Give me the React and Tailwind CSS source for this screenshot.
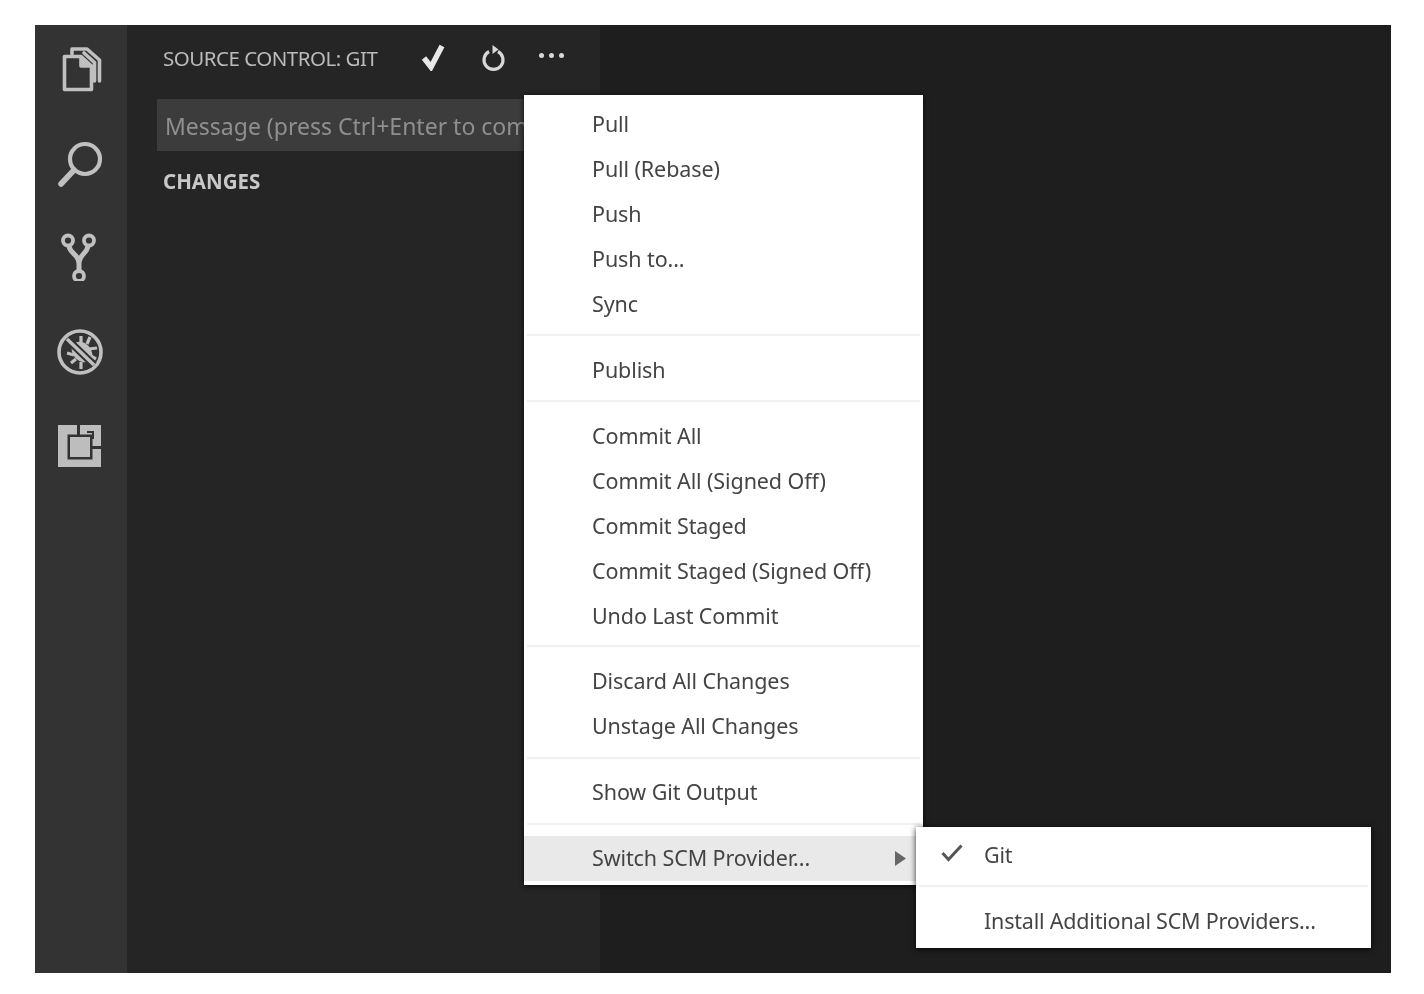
import React from 'react';

const menuGroups = [
  ['Pull', 'Pull (Rebase)', 'Push', 'Push to...', 'Sync'],
  ['Publish'],
  ['Commit All', 'Commit All (Signed Off)', 'Commit Staged', 'Commit Staged (Signed Off)', 'Undo Last Commit'],
  ['Discard All Changes', 'Unstage All Changes'],
  ['Show Git Output'],
];

function FilesIcon() {
  return (
    <svg width="48" height="48" viewBox="0 0 48 48" fill="none" stroke="#c0c0c0" strokeWidth="3.6" strokeLinejoin="round" strokeLinecap="round">
      <path d="M7.5 11.5H24L34.5 21V44.5H7.5Z" />
      <path d="M24 12V21H34" fill="#c0c0c0" />
      <path d="M15 9V4H30L42.5 15V36" />
      <path d="M27 8L37.5 17.5V36" />
    </svg>
  );
}

function SearchIcon() {
  return (
    <svg width="48" height="48" viewBox="0 0 48 48" fill="none" stroke="#c0c0c0" strokeLinecap="round">
      <circle cx="28" cy="20" r="15" strokeWidth="4.2" />
      <path d="M17 31L4 45" strokeWidth="5.6" />
    </svg>
  );
}

function GitIcon() {
  return (
    <svg width="48" height="48" viewBox="0 0 48 48" fill="none" stroke="#c0c0c0" strokeWidth="3.8">
      <circle cx="11" cy="7.5" r="5" />
      <circle cx="32" cy="7.5" r="5" />
      <circle cx="22" cy="43" r="5" />
      <path d="M12 13C13 21 22 21 22 31V38M31 13C30 21 22 21 22 31" strokeWidth="5" />
    </svg>
  );
}

function DebugIcon() {
  return (
    <svg width="48" height="48" viewBox="0 0 48 48" fill="none" stroke="#c0c0c0">
      <circle cx="23" cy="25" r="21" strokeWidth="3.6" />
      <ellipse cx="25" cy="25" rx="9" ry="11.5" fill="#c0c0c0" stroke="none" transform="rotate(-45 25 25)" />
      <path d="M24 9V16M33 10L30 17M40 21L32 22M39 32L32 28M10 26L17 28M14 36L19 32M24 42L24 35" strokeWidth="3.2" />
      <path d="M10 12L37 38" stroke="#333333" strokeWidth="7.5" />
      <path d="M10 12L37 38" strokeWidth="3.4" />
    </svg>
  );
}

function ExtensionsIcon() {
  return (
    <svg width="48" height="48" viewBox="0 0 48 48" fill="#bdbdbd" stroke="none">
      <rect x="1" y="4" width="43" height="42" />
      <rect x="10.5" y="13.5" width="25" height="25" fill="#333333" />
      <rect x="13" y="16" width="20" height="20" />
      <rect x="20" y="4" width="3" height="10" fill="#333333" />
      <rect x="33" y="25" width="11" height="3" fill="#333333" />
      <path d="M30 10H37V18H35V12H30Z" fill="#333333" />
    </svg>
  );
}

function MenuRow({ label, className = '' }) {
  return <div className={`h-[45px] pl-[68px] flex items-center ${className}`}>{label}</div>;
}

export default function App() {
  return (
    <div className="w-[1424px] h-[994px] bg-white pt-[25px] pl-[35px] font-['Noto_Sans',sans-serif] blur-[0.6px]">
      <div className="relative w-[1356px] h-[948px] flex bg-[#1e1e1e]">
        <div className="w-[92px] bg-[#333333] flex flex-col items-center pt-[20px] gap-[46px]">
          <FilesIcon />
          <SearchIcon />
          <GitIcon />
          <DebugIcon />
          <ExtensionsIcon />
        </div>

        <div className="w-[473px] bg-[#252526]">
          <div className="h-[74px] pl-[36px] flex items-center">
            <span className="w-[258px] -mt-[8px] text-[20.5px] tracking-[-0.5px] text-[#bbbbbb]">SOURCE CONTROL: GIT</span>
            <svg width="26" height="28" viewBox="0 0 26 28" className="-mt-[10px]" fill="none" stroke="#e8e8e8" strokeWidth="5.5">
              <path d="M3 15L10 24L21 3" />
            </svg>
            <svg width="30" height="30" viewBox="0 0 30 30" className="ml-[31px] -mt-[10px]" fill="none" stroke="#d8d8d8" strokeWidth="3.2">
              <path d="M11 9.5A9.5 9.5 0 1 0 20 9.5" />
              <path d="M14.5 3V12L20.5 7.5Z" fill="#d8d8d8" stroke="none" />
            </svg>
            <div className="ml-[31px] -mt-[14px] flex gap-[5px]">
              <span className="w-[5px] h-[5px] rounded-full bg-[#d8d8d8]" />
              <span className="w-[5px] h-[5px] rounded-full bg-[#d8d8d8]" />
              <span className="w-[5px] h-[5px] rounded-full bg-[#d8d8d8]" />
            </div>
          </div>
          <div className="ml-[30px] w-[413px] h-[52px] bg-[#3c3c3c] pl-[8px] pt-[2px] flex items-center text-[23px] text-[#8f8f8f] whitespace-nowrap overflow-hidden">
            Message (press Ctrl+Enter to commit)
          </div>
          <div className="pl-[36px] mt-[15px] text-[20.5px] font-bold text-[#c8c8c8]">CHANGES</div>
        </div>

        <div className="flex-1" />

        <div className="absolute left-[489px] top-[70px] w-[399px] h-[790px] bg-white py-[6px] text-[21.5px] tracking-[-0.1px] text-[#444444] shadow-[0_1px_5px_rgba(0,0,0,0.8)]">
          {menuGroups.map((group, i) => (
            <div key={group[0]}>
              {group.map((label) => (
                <MenuRow key={label} label={label} className={i < 3 ? 'pt-[2px]' : ''} />
              ))}
              <div className={i === 2 ? 'h-[2px] mx-[3px] mt-[7px] mb-[12px] bg-[#f1f1f1]' : 'h-[2px] mx-[3px] mt-[8px] mb-[11px] bg-[#f1f1f1]'} />
            </div>
          ))}
          <div className="h-[45px] pl-[68px] pr-[17px] flex items-center justify-between bg-[#e9e9e9]">
            <span>Switch SCM Provider...</span>
            <svg width="11" height="15" viewBox="0 0 11 15" fill="#666666">
              <path d="M0 0L11 7.5L0 15Z" />
            </svg>
          </div>
        </div>

        <div className="absolute left-[881px] top-[802px] w-[455px] h-[121px] bg-white pt-[6px] text-[21.5px] tracking-[-0.2px] text-[#444444] shadow-[0_1px_6px_rgba(0,0,0,0.8)]">
          <div className="relative h-[45px] pl-[68px] flex items-center">
            <svg width="22" height="18" viewBox="0 0 22 18" className="absolute left-[25px] top-[11px]" fill="none" stroke="#555555" strokeWidth="3">
              <path d="M1.5 9L7.5 15.5L20.5 1.5" />
            </svg>
            Git
          </div>
          <div className="h-[2px] mx-[3px] mt-[7px] mb-[12px] bg-[#f1f1f1]" />
          <MenuRow label="Install Additional SCM Providers..." />
        </div>
      </div>
    </div>
  );
}
